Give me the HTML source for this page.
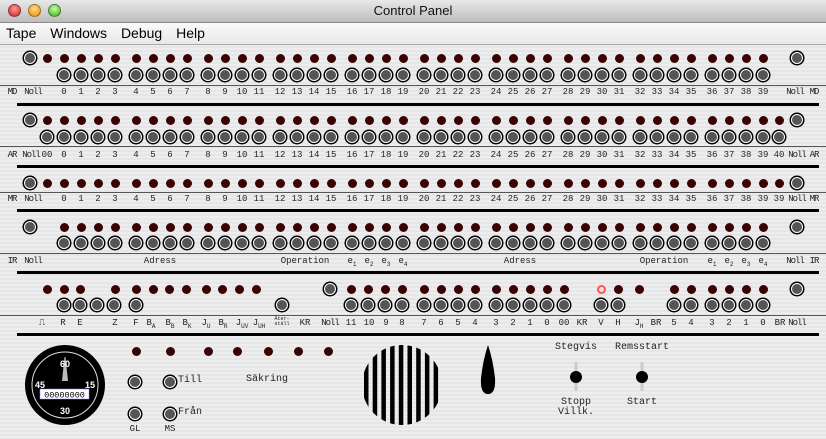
<!DOCTYPE html>
<html><head><meta charset="utf-8"><style>
body{margin:0;width:826px;height:439px;overflow:hidden;position:relative;font-family:"Liberation Mono",monospace;background:repeating-linear-gradient(#ededed 0 2px,#e6e6e6 2px 4px);}
#tb{position:absolute;left:0;top:0;width:826px;height:22px;background:linear-gradient(#e8e8e8,#bdbdbd);border-bottom:1px solid #8a8a8a;text-align:center;font:13px "Liberation Sans",sans-serif;line-height:22px;color:#111}
.tl{position:absolute;top:4px;width:13px;height:13px;border-radius:50%;border:1px solid rgba(0,0,0,.35);box-sizing:border-box}
#mb{position:absolute;left:0;top:23px;width:826px;height:21px;background:linear-gradient(#fafafa,#e8e8e8);border-bottom:1px solid #aaa;font:14px "Liberation Sans",sans-serif;line-height:21px}
#mb span{margin-left:6px;margin-right:4px}
.l{position:absolute;width:9px;height:9px;border-radius:50%;background:#3a0202}
.b{position:absolute;width:10px;height:10px;border-radius:50%;background:#555;border:1px solid #fff;box-shadow:0 0 0 1.5px #000}
.t{position:absolute;font-size:9px;white-space:nowrap;transform:translateX(-50%);color:#222;line-height:10px}
.n{letter-spacing:-1px;font-size:9px}
.hl{position:absolute;left:0;width:826px;height:1px;background:#555}
.th{position:absolute;left:17px;width:802px;height:3px;background:#000}
sub{font-size:6px}
</style></head><body>
<div id="tb">Control Panel
<div class="tl" style="left:8px;background:radial-gradient(circle at 50% 35%,#f99,#c22)"></div>
<div class="tl" style="left:28px;background:radial-gradient(circle at 50% 35%,#fd8,#e80)"></div>
<div class="tl" style="left:48px;background:radial-gradient(circle at 50% 35%,#cf9,#3a2)"></div></div>
<div id="mb"><span>Tape</span> <span>Windows</span> <span>Debug</span> <span>Help</span></div>
<div id="p"></div>
<svg style="position:absolute;left:0;top:0" width="826" height="439">
<circle cx="65" cy="385" r="40" fill="#000"/><circle cx="65" cy="385" r="33" fill="none" stroke="#ddd" stroke-width="1"/>
<polygon points="64.5,357 65.5,357 68,381 62,381" fill="#bbb"/>
<g fill="#fff" font-family="Liberation Sans" font-weight="bold" font-size="9" text-anchor="middle"><text x="65" y="367">60</text><text x="40" y="388">45</text><text x="90" y="388">15</text><text x="65" y="414">30</text></g>
<rect x="40" y="389" width="49" height="10" fill="#fff" stroke="#88f" stroke-width=".5"/>
<text x="64.5" y="397.5" font-family="Liberation Mono" font-size="8.5" text-anchor="middle" fill="#000">00000000</text>
<clipPath id="c"><circle cx="402" cy="385" r="40"/></clipPath>
<g clip-path="url(#c)" fill="#000" id="sp"></g>
<path d="M488 345 Q493 360 495 378 Q496 394 488 394 Q480 394 481 378 Q483 360 488 345Z" fill="#000"/>
<rect x="574.5" y="362" width="3" height="29" fill="#ccc"/><circle cx="576" cy="377" r="6" fill="#000"/>
<rect x="640.5" y="362" width="3" height="29" fill="#ccc"/><circle cx="642" cy="377" r="6" fill="#000"/>
</svg>
<script>
var P=document.getElementById('p'),h='';
function cx(k){if(k<0)return 47;if(k==40)return 779;return 64+k*17+Math.floor(k/4)*4;}
function L(x,y,red){h+='<div class="l" style="left:'+(x-4.5)+'px;top:'+(y-4.5)+'px'+(red?';background:#fdd;box-shadow:inset 0 0 0 2px #f55':'')+'"></div>';}
function B(x,y){h+='<div class="b" style="left:'+(x-6)+'px;top:'+(y-6)+'px"></div>';}
function T(x,y,s,c){h+='<div class="t'+(c?' '+c:'')+'" style="left:'+x+'px;top:'+(y-5)+'px">'+s+'</div>';}
function N(x,y){T(x,y,'Noll','n');}
function HL(y){h+='<div class="hl" style="top:'+y+'px"></div>';}
function TH(y){h+='<div class="th" style="top:'+(y-1)+'px"></div>';}
var k;
B(30,58);B(797,58);for(k=-1;k<40;k++)L(cx(k),58);for(k=0;k<40;k++){B(cx(k),75);T(cx(k),92,k);}
HL(85);T(12,92,'MD','n');N(33,92);N(795,92);T(814,92,'MD','n');TH(104);
B(30,120);B(797,120);for(k=-1;k<41;k++){L(cx(k),120);B(cx(k),137);T(cx(k),155,k<0?'00':k);}
HL(146);T(12,155,'AR','n');N(31,155);N(797,155);T(814,155,'AR','n');TH(166);
B(30,183);B(797,183);for(k=-1;k<41;k++)L(cx(k),183);for(k=0;k<40;k++)T(cx(k),199,k);T(cx(40),199,39);
HL(192);T(12,199,'MR','n');N(33,199);N(797,199);T(814,199,'MR','n');TH(210);
B(30,227);B(797,227);for(k=0;k<40;k++){L(cx(k),227);B(cx(k),243);}
HL(253);T(12,261,'IR','n');N(33,261);N(795,261);T(814,261,'IR','n');
T(160,261,'Adress');T(305,261,'Operation');T(520,261,'Adress');T(664,261,'Operation');
[[16,20],[36,40]].forEach(function(r){for(var i=r[0];i<r[1];i++)T(cx(i),261,'e<sub>'+[1,2,3,4][i-r[0]]+'</sub>');});TH(272);
[47,64,80,115,136,153,169,186,206,222,239,256,351,368,385,402,424,441,458,475,496,513,530,547,564,618,639,674,691,712,729,746,763].forEach(function(x){L(x,289);});L(601,289,1);
[64,80,97,114,136,282,351,368,385,402,424,441,458,475,496,513,530,547,564,601,618,674,691,712,729,746,763].forEach(function(x){B(x,305);});
B(330,289);B(797,289);HL(315);
var lb=[[42,'⎍'],[63,'R'],[80,'E'],[115,'Z'],[136,'F'],[151,'B<sub>A</sub>'],[170,'B<sub>B</sub>'],[187,'B<sub>K</sub>'],[206,'J<sub>U</sub>'],[223,'B<sub>R</sub>'],[242,'J<sub>UV</sub>'],[259,'J<sub>UH</sub>'],[305,'KR'],[351,'11'],[369,'10'],[386,'9'],[402,'8'],[424,'7'],[441,'6'],[458,'5'],[475,'4'],[496,'3'],[513,'2'],[530,'1'],[547,'0'],[564,'00'],[582,'KR'],[601,'V'],[618,'H'],[639,'J<sub>H</sub>'],[656,'BR'],[674,'5'],[691,'4'],[712,'3'],[729,'2'],[746,'1'],[763,'0'],[780,'BR']];
lb.forEach(function(a){T(a[0],323,a[1]);});N(330,323);N(797,323);
h+='<div class="t" style="left:282px;top:317px;font-size:5px;line-height:5px;text-align:center">Åter-<br>ställ</div>';
TH(334);
[136,170,208,237,268,298,328].forEach(function(x){L(x,351);});
B(135,382);B(170,382);B(135,414);B(170,414);
h+='<div class="t" style="left:178px;top:376px;transform:none;font-size:10px">Till</div><div class="t" style="left:178px;top:408px;transform:none;font-size:10px">Från</div>';
T(135,429,'GL');T(170,429,'MS');
h+='<div class="t" style="left:267px;top:375px;font-size:10px">Säkring</div>';
h+='<div class="t" style="left:576px;top:343px;font-size:10px">Stegvis</div><div class="t" style="left:642px;top:343px;font-size:10px">Remsstart</div>';
h+='<div class="t" style="left:576px;top:398px;font-size:10px;text-align:center">Stopp<br>Villk.</div><div class="t" style="left:642px;top:398px;font-size:10px">Start</div>';
P.innerHTML=h;
var s='';for(var x=364;x<442;x+=8.7)s+='<rect x="'+x+'" y="340" width="4.5" height="90"/>';
document.getElementById('sp').innerHTML=s;
</script>
</body></html>
